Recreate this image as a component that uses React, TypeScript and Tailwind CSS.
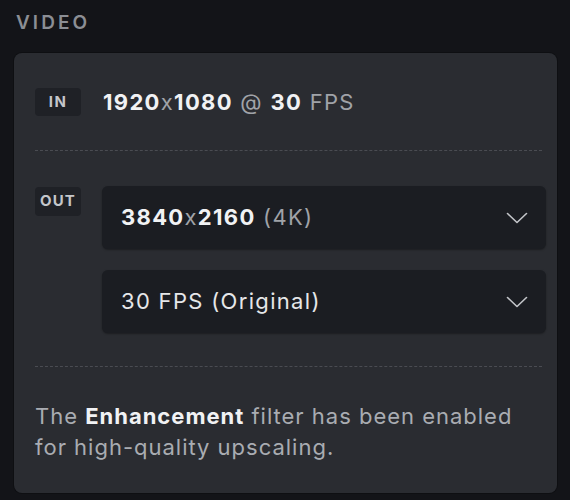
import React from "react";

function Chevron() {
  return (
    <svg width="22" height="12" viewBox="0 0 22 12" fill="none" className="text-[#c3c5c9]">
      <polyline points="1.5,1.5 11,10.5 20.5,1.5" stroke="currentColor" strokeWidth="1.6" strokeLinecap="round" strokeLinejoin="round" />
    </svg>
  );
}

function Select({ children }: { children: React.ReactNode }) {
  return (
    <div className="flex h-[63px] items-center justify-between rounded-[6px] bg-[#1b1d22] pl-[19px] pr-[18px] shadow-[0_1px_2px_rgba(0,0,0,0.35)]">
      <div className="text-[22px] tracking-[0.06em] text-[#e6e7e9]">{children}</div>
      <Chevron />
    </div>
  );
}

export default function App() {
  return (
    <div
      className="min-h-[500px] w-[570px] bg-[#131418] pl-[14px] pr-[13px] pt-[10px]"
      style={{ fontFamily: "Inter, 'Noto Sans', sans-serif" }}
    >
      <div className="pl-[2px] text-[19px] font-semibold leading-[26px] tracking-[0.16em] text-[#8b8e94]">VIDEO</div>
      <div className="mt-[17px] rounded-[8px] bg-[#2a2c31] pb-[30px] pl-[21px] pr-[11px] pt-[35px] shadow-[0_0_0_1px_rgba(0,0,0,0.25)]">
        <div className="flex h-[28px] items-center gap-[22px]">
          <div className="flex h-[28px] w-[46px] items-center justify-center rounded-[4px] bg-[#1f2126] text-[15px] font-bold tracking-[0.1em] text-[#c4c6ca]">
            IN
          </div>
          <div className="text-[22px] leading-[28px] tracking-[0.06em] text-[#a0a3a8]">
            <span className="font-bold text-[#f1f2f4]">1920</span>x
            <span className="font-bold text-[#f1f2f4]">1080</span> @{" "}
            <span className="font-bold text-[#f1f2f4]">30</span> FPS
          </div>
        </div>
        <div className="mr-[4px] mt-[34px] border-t border-dashed border-[#4a4c52]" />
        <div className="mt-[35px] flex gap-[21px]">
          <div className="mt-[1px] flex h-[29px] w-[46px] items-center justify-center rounded-[4px] bg-[#1f2126] text-[15px] font-bold tracking-[0.08em] text-[#c4c6ca]">
            OUT
          </div>
          <div className="flex flex-1 flex-col gap-[21px]">
            <Select>
              <span className="font-bold text-[#f1f2f4]">3840</span>
              <span className="text-[#a0a3a8]">x</span>
              <span className="font-bold text-[#f1f2f4]">2160</span>
              <span className="text-[#a0a3a8]"> (4K)</span>
            </Select>
            <Select>30 FPS (Original)</Select>
          </div>
        </div>
        <div className="mr-[4px] mt-[33px] border-t border-dashed border-[#4a4c52]" />
        <p className="mt-[34px] text-[22px] leading-[31px] tracking-[0.045em] text-[#a9acb2]">
          The <span className="font-bold text-[#f1f2f4]">Enhancement</span> filter has been enabled
          <br />
          for high-quality upscaling.
        </p>
      </div>
    </div>
  );
}
